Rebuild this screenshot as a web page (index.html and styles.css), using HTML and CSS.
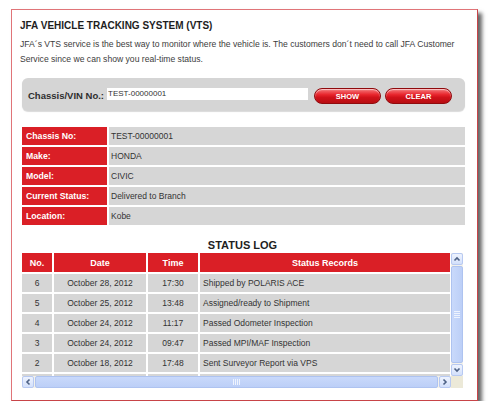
FILE: index.html
```html
<!DOCTYPE html>
<html>
<head>
    <meta name="viewport" content="width=device-width, initial-scale=1.0">
    <link rel="stylesheet" href="styles.css">
    <title>JFA Vehicle Tracking System</title>
</head>
<body>
    <div class="frame">
        <h1 class="title">JFA VEHICLE TRACKING SYSTEM (VTS)</h1>
        <p class="intro">JFA&acute;s VTS service is the best way to monitor where the vehicle is. The customers don&acute;t need to call JFA Customer Service since we can show you real-time status.</p>

        <div class="search">
            <label class="search-label" for="chassisInput">Chassis/VIN No.:</label>
            <input id="chassisInput" class="search-input" type="text" value="TEST-00000001">
            <button class="btn" id="showButton">SHOW</button>
            <button class="btn" id="clearButton">CLEAR</button>
        </div>

        <div class="details">
            <div class="details-label">Chassis No:</div>
            <div class="details-value">TEST-00000001</div>
            <div class="details-label">Make:</div>
            <div class="details-value">HONDA</div>
            <div class="details-label">Model:</div>
            <div class="details-value">CIVIC</div>
            <div class="details-label">Current Status:</div>
            <div class="details-value">Delivered to Branch</div>
            <div class="details-label">Location:</div>
            <div class="details-value">Kobe</div>
        </div>

        <h2 class="log-title">STATUS LOG</h2>

        <div class="log">
            <div class="log-view">
                <table class="log-table">
                    <colgroup>
                        <col class="col-no">
                        <col class="col-date">
                        <col class="col-time">
                        <col class="col-status">
                    </colgroup>
                    <tr>
                        <th>No.</th>
                        <th>Date</th>
                        <th>Time</th>
                        <th>Status Records</th>
                    </tr>
                    <tr>
                        <td>6</td>
                        <td>October 28, 2012</td>
                        <td>17:30</td>
                        <td class="status">Shipped by POLARIS ACE</td>
                    </tr>
                    <tr>
                        <td>5</td>
                        <td>October 25, 2012</td>
                        <td>13:48</td>
                        <td class="status">Assigned/ready to Shipment</td>
                    </tr>
                    <tr>
                        <td>4</td>
                        <td>October 24, 2012</td>
                        <td>11:17</td>
                        <td class="status">Passed Odometer Inspection</td>
                    </tr>
                    <tr>
                        <td>3</td>
                        <td>October 24, 2012</td>
                        <td>09:47</td>
                        <td class="status">Passed MPI/MAF Inspection</td>
                    </tr>
                    <tr>
                        <td>2</td>
                        <td>October 18, 2012</td>
                        <td>17:48</td>
                        <td class="status">Sent Surveyor Report via VPS</td>
                    </tr>
                    <tr class="row-more">
                        <td></td>
                        <td></td>
                        <td></td>
                        <td class="status"></td>
                    </tr>
                </table>
            </div>

            <div class="vbar">
                <div class="sb-btn">
                    <svg width="8" height="8" viewBox="0 0 8 8"><polyline points="1.5,5.5 4,3 6.5,5.5" fill="none" stroke="#4d6185" stroke-width="1.6"/></svg>
                </div>
                <div class="sb-thumb"><span class="grip grip-v"></span></div>
                <div class="sb-btn">
                    <svg width="8" height="8" viewBox="0 0 8 8"><polyline points="1.5,2.5 4,5 6.5,2.5" fill="none" stroke="#4d6185" stroke-width="1.6"/></svg>
                </div>
            </div>

            <div class="hbar">
                <div class="sb-btn">
                    <svg width="8" height="8" viewBox="0 0 8 8"><polyline points="5.5,1.5 3,4 5.5,6.5" fill="none" stroke="#4d6185" stroke-width="1.6"/></svg>
                </div>
                <div class="sb-thumb"><span class="grip grip-h"></span></div>
                <div class="sb-btn">
                    <svg width="8" height="8" viewBox="0 0 8 8"><polyline points="2.5,1.5 5,4 2.5,6.5" fill="none" stroke="#4d6185" stroke-width="1.6"/></svg>
                </div>
            </div>

            <div class="sb-corner"></div>
        </div>
    </div>
</body>
</html>
```

FILE: styles.css
```css
* {
    box-sizing: border-box;
}

body {
    margin: 0;
    background-color: #ffffff;
    font-family: "Liberation Sans", Arial, sans-serif;
    color: #333333;
}

.frame {
    width: 467px;
    margin: 9px 0 0 11px;
    padding: 9px 12px 12px 8px;
    border: 1px solid #e07478;
    border-right-color: #c84448;
    border-bottom-color: #c84448;
    box-shadow: 4px 4px 4px rgba(0,0,0,0.6);
    background-color: #ffffff;
}

.title {
    margin: 0;
    font-size: 10px;
    line-height: 14px;
    font-weight: bold;
    color: #1e1e1e;
}

.intro {
    margin: 4px 0 0 0;
    font-size: 8.6px;
    line-height: 15px;
    color: #3c3c3c;
}

/* search bar */
.search {
    display: flex;
    align-items: center;
    height: 33px;
    margin: 11px 0 0 2px;
    padding-left: 6px;
    background-color: #d5d5d5;
    border-radius: 6px;
    box-shadow: 0 1px 1px rgba(0,0,0,0.15);
}

.search-label {
    margin: 2px 3px 0 0;
    font-size: 9.5px;
    font-weight: bold;
    color: #2e2e2e;
}

.search-input {
    width: 201px;
    height: 12px;
    margin: 0 6px 1px 0;
    padding: 0 0 0 1px;
    border: 0;
    font-family: "Liberation Sans", Arial, sans-serif;
    font-size: 8px;
    line-height: 12px;
    color: #333333;
    background-color: #ffffff;
}

.btn {
    width: 67px;
    height: 16px;
    margin: 3px 4px 0 0;
    padding: 0;
    border: 1px solid #8f0a0d;
    border-radius: 8px;
    background: linear-gradient(to bottom, #f47a7d 0%, #e8262d 40%, #d0121a 60%, #b80d12 100%);
    box-shadow: inset 0 1px 1px rgba(255,255,255,0.6);
    font-family: "Liberation Sans", Arial, sans-serif;
    font-size: 7.5px;
    font-weight: bold;
    color: #ffffff;
}

/* vehicle details */
.details {
    display: grid;
    grid-template-columns: 85px 1fr;
    grid-auto-rows: 18px;
    gap: 2px;
    margin: 16px 0 0 2px;
}

.details-label,
.details-value {
    display: flex;
    align-items: center;
}

.details-label {
    padding-left: 4px;
    background-color: #da1f26;
    color: #ffffff;
    font-size: 8.7px;
    font-weight: bold;
}

.details-value {
    padding-left: 2px;
    background-color: #d6d6d6;
    font-size: 8.5px;
}

/* status log */
.log-title {
    margin: 14px 0 0 0;
    text-align: center;
    font-size: 11px;
    line-height: 13px;
    font-weight: bold;
    color: #1e1e1e;
}

.log {
    display: grid;
    grid-template-columns: 429px 12px;
    grid-template-rows: 123px 12px;
    margin: 1px 0 0 2px;
}

.log-view {
    overflow: hidden;
}

.log-table {
    table-layout: fixed;
    width: 432px;
    margin: -2px 0 0 -2px;
    border-collapse: separate;
    border-spacing: 2px;
}

.col-no { width: 30px; }
.col-date { width: 92px; }
.col-time { width: 50px; }
.col-status { width: 250px; }

.log-table th,
.log-table td {
    padding: 0;
    text-align: center;
    white-space: nowrap;
}

.log-table th {
    height: 19px;
    background-color: #da1f26;
    color: #ffffff;
    font-size: 9px;
    font-weight: bold;
}

.log-table td {
    height: 18px;
    background-color: #d6d6d6;
    font-size: 8.5px;
    color: #333333;
}

.log-table td.status {
    padding-left: 3px;
    text-align: left;
}

/* scrollbars */
.vbar,
.hbar {
    display: flex;
    background-color: #f3f1ea;
}

.vbar {
    flex-direction: column;
}

.sb-btn {
    display: flex;
    align-items: center;
    justify-content: center;
    flex: 0 0 12px;
    height: 12px;
    border: 1px solid #b7c9f2;
    border-radius: 2px;
    background: linear-gradient(to bottom, #eef3fe, #d3e0fb);
}

.hbar .sb-btn {
    width: 12px;
}

.sb-thumb {
    display: flex;
    align-items: center;
    justify-content: center;
    flex: 1;
    margin: 1px 0;
    border: 1px solid #aec3f0;
    border-radius: 2px;
    background: linear-gradient(to right, #c9d9fb, #bccff7);
}

.hbar .sb-thumb {
    margin: 0 1px;
    background: linear-gradient(to bottom, #c9d9fb, #bccff7);
}

.grip-v {
    width: 6px;
    height: 7px;
    background: repeating-linear-gradient(to bottom, #eef3fe 0, #eef3fe 1px, transparent 1px, transparent 2px);
}

.grip-h {
    width: 7px;
    height: 6px;
    background: repeating-linear-gradient(to right, #eef3fe 0, #eef3fe 1px, transparent 1px, transparent 2px);
}

.sb-corner {
    background-color: #ece9d8;
}
```
